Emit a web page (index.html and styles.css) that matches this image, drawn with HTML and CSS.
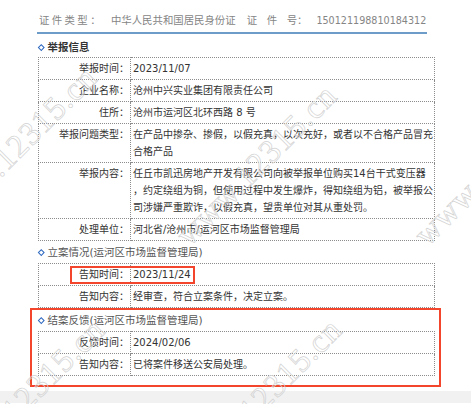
FILE: index.html
```html
<!DOCTYPE html>
<html lang="zh-CN">
<head>
<meta charset="utf-8">
<title>举报信息</title>
<link rel="stylesheet" href="styles.css">
</head>
<body>
<div class="page">
  <div class="idbar">
    <span class="k1">证件类型：</span><span class="v1">中华人民共和国居民身份证</span><span class="k2"><span class="sp">证件</span>号：</span><span class="v2">150121198810184312</span>
  </div>

  <div class="sec-title first"><i class="dia"></i>举报信息</div>
  <table class="info">
    <tr><th>举报时间：</th><td>2023/11/07</td></tr>
    <tr><th>企业名称：</th><td>沧州中兴实业集团有限责任公司</td></tr>
    <tr><th>住所：</th><td>沧州市运河区北环西路 8 号</td></tr>
    <tr><th>举报问题类型：</th><td>在产品中掺杂、掺假，以假充真，以次充好，或者以不合格产品冒充<br>合格产品</td></tr>
    <tr><th>举报内容：</th><td>任丘市凯迅房地产开发有限公司向被举报单位购买14台干式变压器<br>，约定绕组为铜，但使用过程中发生爆炸，得知绕组为铝，被举报公<br>司涉嫌严重欺诈，以假充真，望贵单位对其从重处罚。</td></tr>
    <tr><th>处理单位：</th><td>河北省/沧州市/运河区市场监督管理局</td></tr>
  </table>

  <div class="sec-title second"><i class="dia"></i>立案情况(运河区市场监督管理局)</div>
  <div class="t-wrap">
    <table class="info">
      <tr><th>告知时间：</th><td>2023/11/24</td></tr>
      <tr><th>告知内容：</th><td>经审查，符合立案条件，决定立案。</td></tr>
    </table>
    <div class="mark"></div>
  </div>

  <div class="result">
    <div class="sec-title third"><i class="dia"></i>结案反馈(运河区市场监督管理局)</div>
    <table class="info">
      <tr><th>反馈时间：</th><td>2024/02/06</td></tr>
      <tr><th>告知内容：</th><td>已将案件移送公安局处理。</td></tr>
    </table>
  </div>
</div>
<div class="footband"></div>

<div class="wm" aria-hidden="true">
  <span class="w1">www.12315.cn</span>
  <span class="w2">www.12315.cn</span>
  <span class="w3">www.12315.cn</span>
  <span class="w4">www.12315.cn</span>
  <span class="w5">www.12315.cn</span>
</div>
</body>
</html>
```

FILE: styles.css
```css
html, body {
  margin: 0;
  padding: 0;
}
body {
  width: 471px;
  height: 404px;
  position: relative;
  overflow: hidden;
  background: #ffffff;
  font-family: "DejaVu Sans", "Noto Sans CJK SC", sans-serif;
  font-size: 10px;
  color: #333333;
}
.page {
  margin-left: 38px;
  width: 397px;
}
.idbar {
  margin-left: -1px;
  width: 388px;
  padding: 13px 0 5px 2px;
  height: 14px;
  line-height: 14px;
  border-bottom: 2px solid #6d9cc9;
  color: #858585;
  font-size: 10.4px;
  white-space: nowrap;
}
.k1 { letter-spacing: 2.4px; }
.v1 { margin-left: 8px; }
.k2 { margin-left: 11px; }
.sp { letter-spacing: 9.6px; }
.v2 { margin-left: 9px; font-size: 9.6px; }

.sec-title {
  display: flex;
  align-items: center;
  height: 14px;
  line-height: 14px;
  font-size: 10.5px;
  color: #555555;
  white-space: nowrap;
}
.sec-title.first {
  padding: 6px 0 3px;
  font-weight: bold;
  color: #333333;
}
.sec-title.second { padding: 4px 0 4px; }
.sec-title.third { padding: 3px 0 4px; }
.dia {
  flex: none;
  width: 4.5px;
  height: 4.5px;
  box-sizing: border-box;
  border: 1.3px solid #2f69c0;
  background: #ffffff;
  transform: rotate(45deg);
  margin: 0 4px 0 1px;
}

.info {
  border-collapse: collapse;
  width: 397px;
  table-layout: fixed;
}
.info th, .info td {
  border: 1px dotted #8c8c8c;
  padding: 2px 2px;
  line-height: 17px;
  vertical-align: top;
  font-weight: normal;
  white-space: nowrap;
  color: #333333;
  font-size: 10px;
}
.info th {
  width: 88px;
  text-align: right;
  padding-right: 1px;
}
.info td { text-align: left; }

.t-wrap { position: relative; }
.mark {
  position: absolute;
  left: 32px;
  top: 3px;
  width: 125px;
  height: 18px;
  box-sizing: border-box;
  border: 2px solid #f2452b;
}
.result {
  border: 2px solid #f2452b;
  margin: 0 -6px 0 -8px;
  padding: 0 4px 9px 6px;
}
.footband {
  margin-top: 4px;
  height: 12px;
  background: #f1f1f1;
}

.wm {
  position: absolute;
  left: 0;
  top: 0;
  width: 471px;
  height: 404px;
  overflow: hidden;
  pointer-events: none;
}
.wm span {
  position: absolute;
  font-family: "Liberation Serif", serif;
  font-size: 33px;
  line-height: 33px;
  letter-spacing: 1px;
  color: transparent;
  -webkit-text-stroke: 0.7px #d2d2d2;
  transform: rotate(-45deg);
  transform-origin: 0 28px;
  white-space: nowrap;
}
.w1 { left: 190px; top: 220px; }
.w2 { left: 428px; top: 220px; }
.w3 { left: -50px; top: 202px; }
.w4 { left: -42px; top: 454px; }
.w5 { left: 195px; top: 454px; }
```
